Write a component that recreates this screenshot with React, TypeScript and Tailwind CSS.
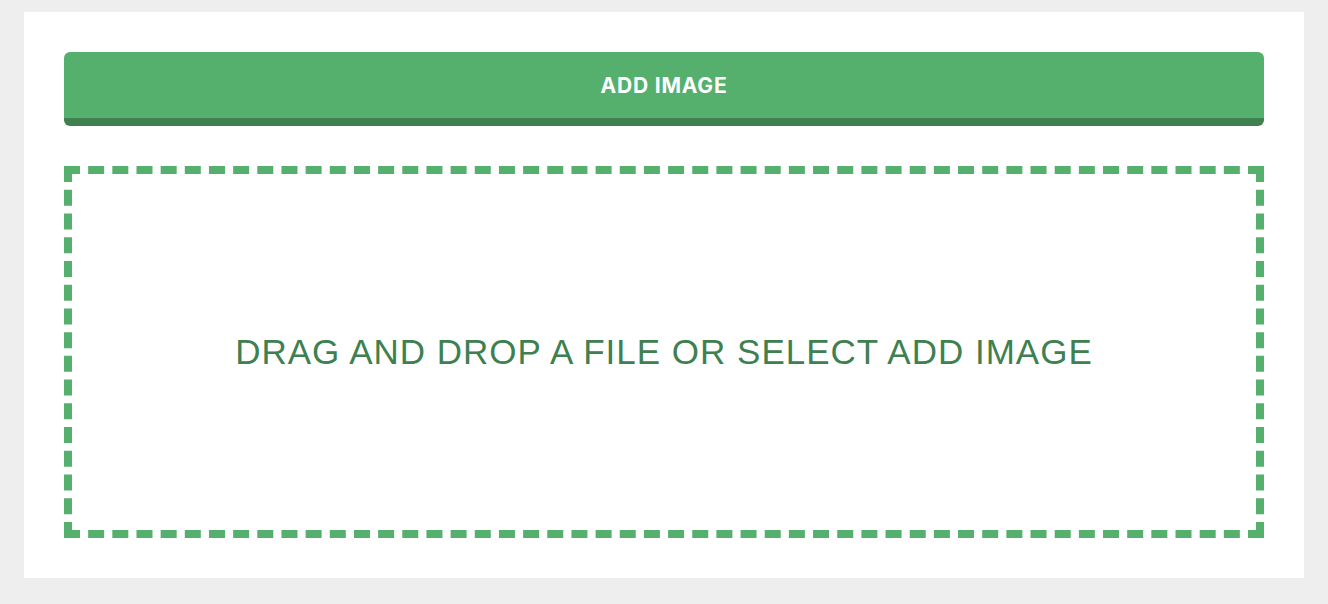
export default function App() {
  return (
    <div className="min-h-screen bg-[#eeeeee] px-6 py-3">
      <div className="bg-white p-10 flex flex-col gap-10">
        <button className="h-[74px] w-full rounded-md bg-[#55b06d] border-b-8 border-[#3e8050] text-white font-bold text-[21px] font-['Inter',sans-serif] tracking-[0.8px] pt-[2px]">
          ADD IMAGE
        </button>
        <div className="h-[372px] border-8 border-dashed border-[#55b06d] flex items-center justify-center">
          <p className="text-[#3e8050] text-[35px] font-['Liberation_Sans',Arial,sans-serif] tracking-[1px]">
            DRAG AND DROP A FILE OR SELECT ADD IMAGE
          </p>
        </div>
      </div>
    </div>
  );
}
